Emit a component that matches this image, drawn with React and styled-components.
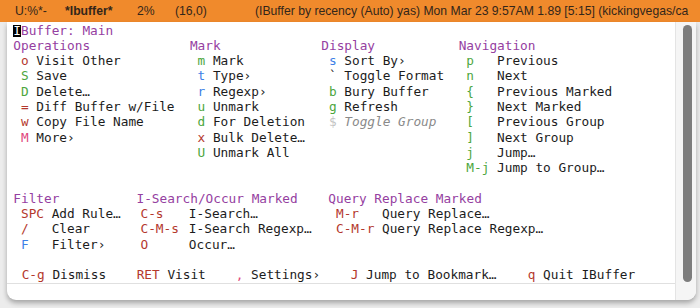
import React from "react";
import styled, { createGlobalStyle } from "styled-components";

const Global = createGlobalStyle`
  html, body { margin: 0; padding: 0; background: #ececec; }
  #root { width: 700px; height: 308px; }
`;

const COLORS = {
  red: "#b4382d",
  green: "#4ca63d",
  blue: "#3d7fe6",
  pink: "#e0467c",
  gray: "#c4c4c4",
  fg: "#1c1c1c",
  purple: "#9540a1",
};

const Page = styled.div`
  width: 700px;
  height: 308px;
  display: flex;
  flex-direction: column;
  background: #ececec;
  overflow: hidden;
`;

const ModeLine = styled.div`
  flex: none;
  height: 22px;
  background: #f08a2c;
  color: #33261a;
  display: flex;
  align-items: center;
  padding-left: 15px;
  font-family: "Liberation Sans", Arial, sans-serif;
  font-size: 12.2px;
  white-space: nowrap;
  overflow: hidden;
`;

const Seg = styled.span`
  flex: none;
  width: ${(p) => (p.$w ? `${p.$w}px` : "auto")};
  font-weight: ${(p) => (p.$bold ? 700 : 400)};
`;

const Window = styled.div`
  flex: none;
  height: 278px;
  margin: 0 4px 0 7px;
  background: #ffffff;
  border-radius: 0 0 9px 9px;
  box-shadow: 0 3px 5px rgba(0, 0, 0, 0.3);
  display: flex;
  overflow: hidden;
`;

const Main = styled.div`
  flex: 1;
  display: flex;
  flex-direction: column;
  min-width: 0;
`;

const Buffer = styled.div`
  flex: 1;
  padding: 0.5px 0 0 6.3px;
  font-family: "DejaVu Sans Mono", "Liberation Mono", monospace;
  font-size: 12.75px;
  line-height: 15.3px;
  color: ${COLORS.fg};
  white-space: pre;
`;

const Echo = styled.div`
  flex: none;
  height: 16px;
  border-top: 1px solid #e0e0e0;
`;

const ScrollTrack = styled.div`
  flex: none;
  width: 21px;
  box-sizing: border-box;
  background: #f5f5f5;
  border-left: 1px solid #e4e4e4;
  padding: 3px 0 18px 7px;
  display: flex;
`;

const Thumb = styled.div`
  width: 9px;
  border-radius: 5px;
  background: #7d7d7d;
`;

const Line = styled.div`
  height: 15.3px;
  color: ${(p) => (p.$purple ? COLORS.purple : "inherit")};
`;

const Cursor = styled.span`
  display: inline-block;
  height: 12px;
  line-height: 12px;
  background: #000;
  color: #fff;
`;

const Grid = styled.div`
  display: grid;
  grid-template-columns: ${(p) => p.$cols};
  align-items: start;
`;

const Column = styled.div`
  display: flex;
  flex-direction: column;
`;

const Item = styled.div`
  display: flex;
  height: 15.3px;
  padding-left: ${(p) => p.$indent || "1ch"};
`;

const Key = styled.span`
  flex: none;
  width: ${(p) => p.$w};
  margin-right: ${(p) => p.$gap || "1ch"};
  color: ${(p) => COLORS[p.$c]};
`;

const Desc = styled.span`
  color: ${(p) => (p.$muted ? "#8a8a8a" : COLORS.fg)};
  font-style: ${(p) => (p.$muted ? "italic" : "normal")};
`;

const BottomRow = styled.div`
  display: grid;
  grid-template-columns: 115px 99px 115px 177px auto;
  padding-left: 8.4px;
  height: 15.3px;
`;

const Binding = styled.span`
  display: flex;
`;

const topCols = [
  {
    title: "Operations",
    keyW: "1ch",
    items: [
      ["o", "Visit Other", "red"],
      ["S", "Save", "green"],
      ["D", "Delete…", "green"],
      ["=", "Diff Buffer w/File", "red"],
      ["w", "Copy File Name", "red"],
      ["M", "More›", "pink"],
    ],
  },
  {
    title: "Mark",
    keyW: "1ch",
    items: [
      ["m", "Mark", "green"],
      ["t", "Type›", "blue"],
      ["r", "Regexp›", "blue"],
      ["u", "Unmark", "green"],
      ["d", "For Deletion", "green"],
      ["x", "Bulk Delete…", "red"],
      ["U", "Unmark All", "green"],
    ],
  },
  {
    title: "Display",
    keyW: "1ch",
    items: [
      ["s", "Sort By›", "blue"],
      ["`", "Toggle Format", "fg"],
      ["b", "Bury Buffer", "green"],
      ["g", "Refresh", "green"],
      ["$", "Toggle Group", "gray", true],
    ],
  },
  {
    title: "Navigation",
    keyW: "3ch",
    items: [
      ["p", "Previous", "green"],
      ["n", "Next", "green"],
      ["{", "Previous Marked", "green"],
      ["}", "Next Marked", "green"],
      ["[", "Previous Group", "green"],
      ["]", "Next Group", "green"],
      ["j", "Jump…", "green"],
      ["M-j", "Jump to Group…", "green"],
    ],
  },
];

const lowCols = [
  {
    title: "Filter",
    keyW: "3ch",
    items: [
      ["SPC", "Add Rule…", "red"],
      ["/", "Clear", "red"],
      ["F", "Filter›", "blue"],
    ],
  },
  {
    title: "I-Search/Occur Marked",
    keyW: "5ch",
    indent: "4px",
    gap: "10px",
    items: [
      ["C-s", "I-Search…", "red"],
      ["C-M-s", "I-Search Regexp…", "red"],
      ["O", "Occur…", "red"],
    ],
  },
  {
    title: "Query Replace Marked",
    keyW: "5ch",
    items: [
      ["M-r", "Query Replace…", "red"],
      ["C-M-r", "Query Replace Regexp…", "red"],
    ],
  },
];

const bottom = [
  ["C-g", "Dismiss", "red"],
  ["RET", "Visit", "red"],
  [",", "Settings›", "pink"],
  ["J", "Jump to Bookmark…", "red"],
  ["q", "Quit IBuffer", "red"],
];

function Group({ col }) {
  return (
    <Column>
      <Line $purple>{col.title}</Line>
      {col.items.map(([k, d, c, muted]) => (
        <Item key={k} $indent={col.indent}>
          <Key $w={col.keyW} $c={c} $gap={col.gap}>
            {k}
          </Key>
          <Desc $muted={muted}>{d}</Desc>
        </Item>
      ))}
    </Column>
  );
}

export default function App() {
  return (
    <>
      <Global />
      <Page>
        <ModeLine>
          <Seg $w={50}>U:%*-</Seg>
          <Seg $w={72} $bold>
            *Ibuffer*
          </Seg>
          <Seg $w={38}>2%</Seg>
          <Seg $w={80}>(16,0)</Seg>
          <Seg>
            (IBuffer by recency (Auto) yas) Mon Mar 23 9:57AM 1.89 [5:15]
            (kickingvegas/ca
          </Seg>
        </ModeLine>
        <Window>
          <Main>
            <Buffer>
              <Line $purple>
                <Cursor>I</Cursor>Buffer: Main
              </Line>
              <Grid $cols="176.6px 131.4px 137.4px 1fr">
                {topCols.map((c) => (
                  <Group key={c.title} col={c} />
                ))}
              </Grid>
              <Line />
              <Grid $cols="123.2px 191.8px 1fr">
                {lowCols.map((c) => (
                  <Group key={c.title} col={c} />
                ))}
              </Grid>
              <Line />
              <BottomRow>
                {bottom.map(([k, d, c]) => (
                  <Binding key={k}>
                    <Key $w="auto" $c={c}>
                      {k}
                    </Key>
                    <Desc>{d}</Desc>
                  </Binding>
                ))}
              </BottomRow>
            </Buffer>
            <Echo />
          </Main>
          <ScrollTrack>
            <Thumb />
          </ScrollTrack>
        </Window>
      </Page>
    </>
  );
}
